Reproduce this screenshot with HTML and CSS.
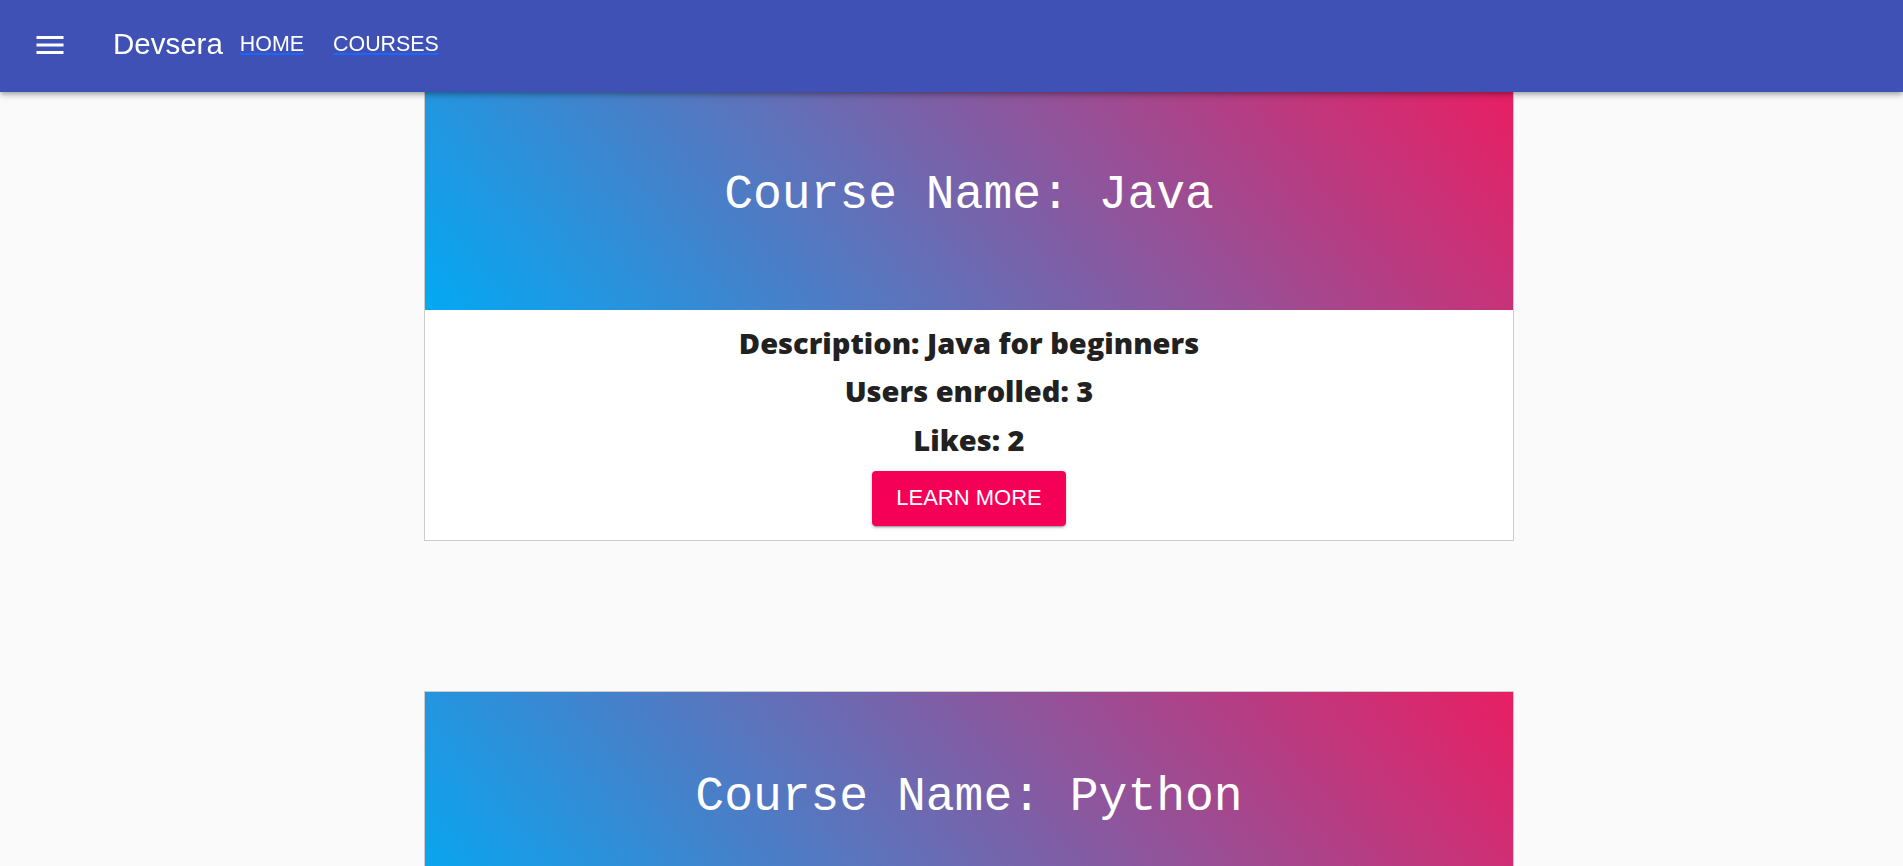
FILE: index.html
```html
<!DOCTYPE html>
<html lang="en">
<head>
<meta charset="utf-8">
<title>Devsera</title>
<link rel="stylesheet" href="styles.css">
</head>
<body>
<header class="appbar">
  <button class="menu-btn" aria-label="menu">
    <svg viewBox="0 0 24 24" width="36" height="36"><path fill="#fff" d="M3 18h18v-2H3v2zm0-5h18v-2H3v2zm0-7v2h18V6H3z"/></svg>
  </button>
  <span class="brand">Devsera</span>
  <nav class="nav">
    <a class="nav-link" href="#">HOME</a>
    <a class="nav-link" href="#">COURSES</a>
  </nav>
</header>
<main class="content">
  <section class="card">
    <div class="cover"><h2 class="cover-title">Course Name: Java</h2></div>
    <div class="card-body">
      <p class="info">Description: Java for beginners</p>
      <p class="info">Users enrolled: 3</p>
      <p class="info">Likes: 2</p>
      <button class="learn-btn">LEARN MORE</button>
    </div>
  </section>
  <section class="card">
    <div class="cover"><h2 class="cover-title">Course Name: Python</h2></div>
    <div class="card-body">
      <p class="info">Description: Python for beginners</p>
      <p class="info">Users enrolled: 2</p>
      <p class="info">Likes: 1</p>
      <button class="learn-btn">LEARN MORE</button>
    </div>
  </section>
</main>
</body>
</html>
```
FILE: styles.css
```css
html, body {
  margin: 0;
  padding: 0;
}
body {
  background: #fafafa;
  font-family: "Liberation Sans", Arial, sans-serif;
  overflow: hidden;
}
.appbar {
  position: fixed;
  top: 0;
  left: 0;
  right: 0;
  height: 92px;
  box-sizing: border-box;
  padding: 0 0 2px 32px;
  display: flex;
  align-items: center;
  background: #3f51b5;
  color: #fff;
  z-index: 10;
  box-shadow: 0 2px 4px -1px rgba(0,0,0,0.2), 0 4px 5px 0 rgba(0,0,0,0.14), 0 1px 10px 0 rgba(0,0,0,0.12);
}
.menu-btn {
  width: 36px;
  height: 36px;
  padding: 0;
  margin: 0 45px 0 0;
  border: 0;
  background: none;
  display: flex;
}
.brand {
  font-size: 29.5px;
  line-height: 1;
  margin: 0 17px 2px 0;
}
.nav {
  display: flex;
  gap: 29px;
}
.nav-link {
  color: #fff;
  font-size: 21.4px;
  line-height: 1;
  text-decoration: underline;
  text-decoration-color: #1a66ff;
  text-decoration-thickness: 2px;
  text-underline-offset: 2px;
}
.content {
  padding: 89px 0 0 35px;
  display: flex;
  flex-direction: column;
  align-items: center;
  gap: 150px;
}
.card {
  width: 1090px;
  box-sizing: border-box;
  border: 1px solid #ccc;
  background: #fff;
}
.cover {
  padding: 81px 0 91px;
  background: linear-gradient(50deg, #03a9f4, #e91e63);
  text-align: center;
}
.cover-title {
  margin: 0;
  font-family: "Liberation Mono", "Courier New", monospace;
  font-weight: normal;
  font-size: 48px;
  line-height: 48px;
  color: #fff;
}
.card-body {
  padding: 9px 0 14px;
  display: flex;
  flex-direction: column;
  align-items: center;
  text-align: center;
}
.info {
  margin: 0;
  font-family: "Open Sans", "Noto Sans", sans-serif;
  font-weight: 800;
  font-size: 29px;
  line-height: 48.3px;
  color: #212121;
}
.learn-btn {
  margin-top: 7px;
  padding: 15.5px 24px;
  border: 0;
  border-radius: 4px;
  background: #f50057;
  color: #fff;
  font-family: "Liberation Sans", Arial, sans-serif;
  font-size: 22px;
  line-height: 24px;
  box-shadow: 0 3px 1px -2px rgba(0,0,0,0.2), 0 2px 2px 0 rgba(0,0,0,0.14), 0 1px 5px 0 rgba(0,0,0,0.12);
}
```
